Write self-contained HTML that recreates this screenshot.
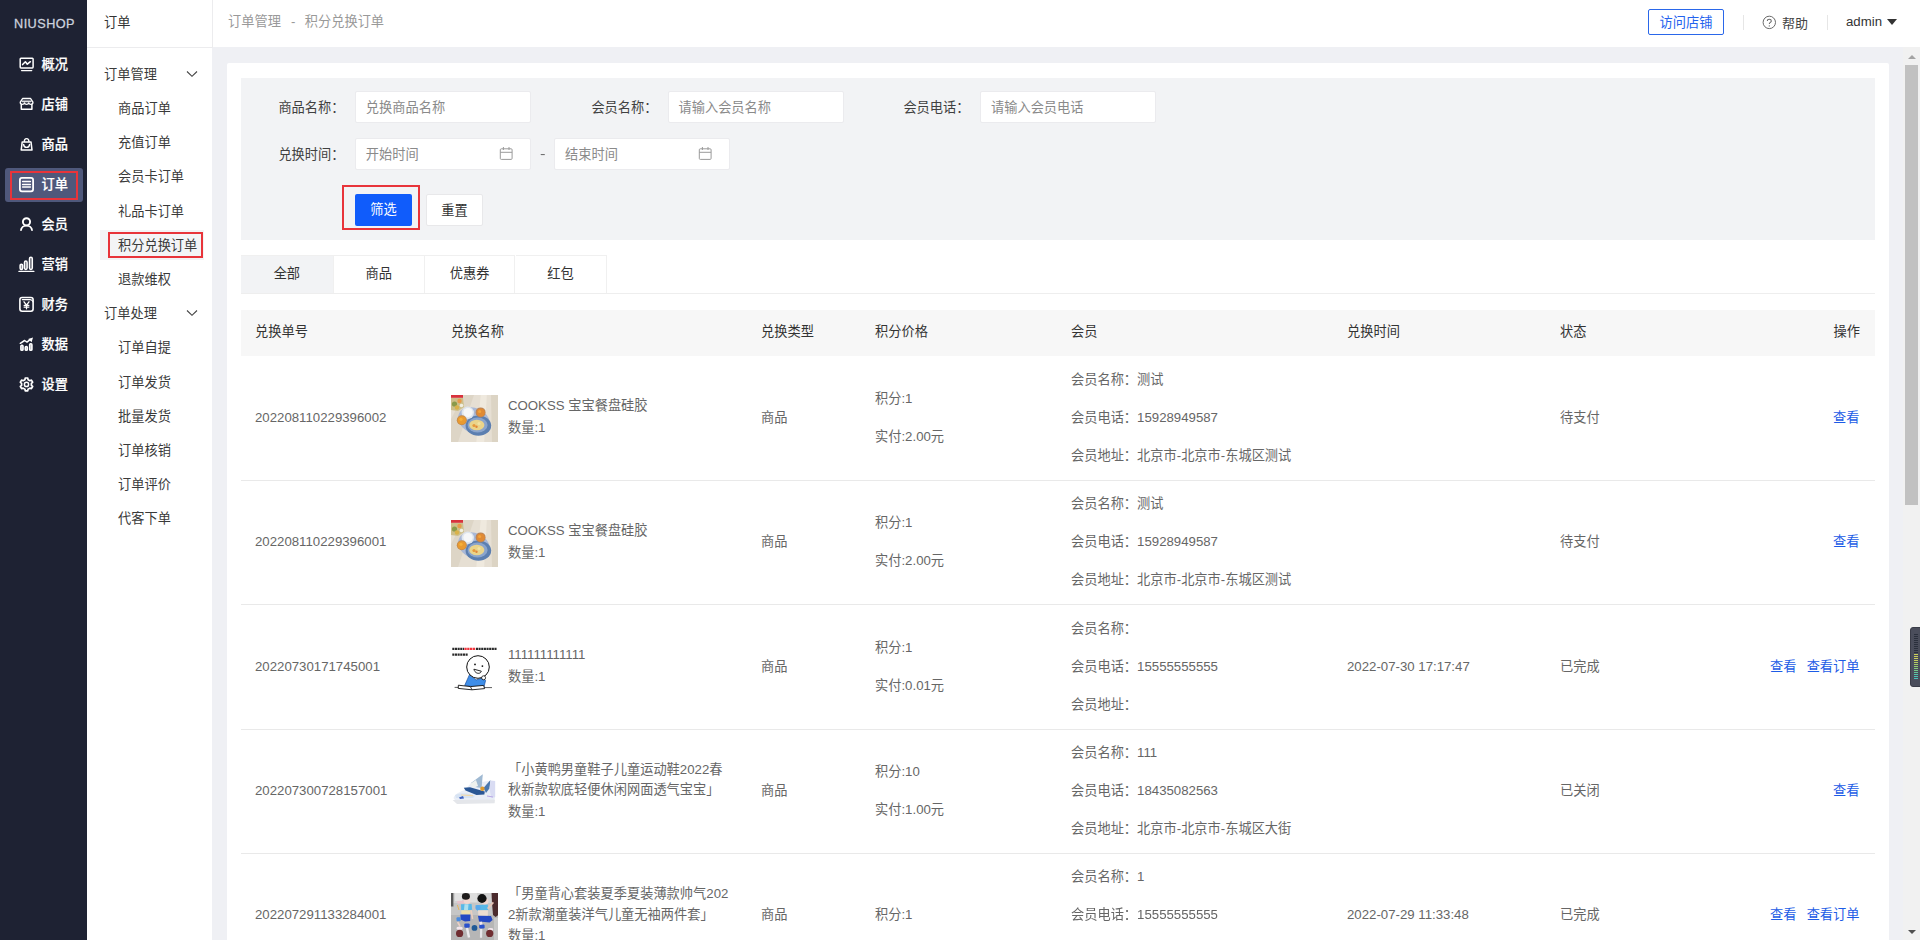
<!DOCTYPE html>
<html lang="zh-CN">
<head>
<meta charset="utf-8">
<title>积分兑换订单</title>
<style>
*{box-sizing:border-box;margin:0;padding:0}
html,body{width:1920px;height:940px;overflow:hidden;background:#eff0f4}
body{font-family:"Liberation Sans","Noto Sans CJK SC",sans-serif;font-size:13.22px;color:#333;position:relative;line-height:1}
a{text-decoration:none;color:inherit}
.abs{position:absolute}
#soft{position:absolute;left:-20px;top:-20px;width:1960px;height:980px;filter:blur(.35px);background:#eff0f4}
#stage{position:absolute;left:20px;top:20px;width:1920px;height:940px}
#nav1{position:absolute;left:0;top:0;width:87px;height:940px;background:#1e2233}
#logo{position:absolute;left:0;top:0;width:89px;height:47px;color:#cdd2df;font-size:12.7px;letter-spacing:.45px;font-weight:400;-webkit-text-stroke:.28px #cdd2df;text-align:center;line-height:48.5px}
.n1{position:absolute;left:5px;width:78px;height:34px;border-radius:3px;color:#fff;font-weight:500;-webkit-text-stroke:.2px #fff;font-size:13.22px}
.n1 span{position:absolute;left:36.6px;top:0px;line-height:33px;white-space:nowrap}

.n1.on{background:#4f587b}
.redbox{position:absolute;border:2.5px solid #e8343a}
#nav2{position:absolute;left:87px;top:0;width:125.2px;height:940px;background:#fff}
#nav2 .hd{position:absolute;left:0;top:0;width:125.6px;border-right:1px solid #ececee;height:47.5px;border-bottom:1px solid #ececee;line-height:45px;padding-left:17px;color:#333}
.g{position:absolute;left:17px;margin-top:.6px;line-height:20px;height:20px;color:#3a3a3a;white-space:nowrap}
.s{position:absolute;left:31px;margin-top:.6px;line-height:20px;height:20px;color:#3a3a3a;white-space:nowrap}
.chev{position:absolute;left:99px;width:12px;height:8px}
#hdr{position:absolute;left:213px;top:0;width:1707px;height:47px;background:#fff}
#crumb{position:absolute;left:15px;top:0;line-height:44.4px;color:#999;white-space:nowrap}
#card{position:absolute;left:227px;top:63px;width:1662px;height:900px;background:#fff;border-radius:2px}
#filter{position:absolute;left:241px;top:78px;width:1634px;height:162px;background:#f2f3f5}
.lab{position:absolute;margin-top:.5px;line-height:30px;height:30px;color:#404040;text-align:right;white-space:nowrap}
.inp{position:absolute;height:32.5px;width:176.4px;background:#fff;border:1px solid #ebebee;border-radius:2px;line-height:30.4px;padding-top:1.2px;padding-left:10px;color:#8a8a8a;white-space:nowrap}
.btn{position:absolute;height:32px;line-height:30px;padding-top:.6px;text-align:center;border-radius:2px;white-space:nowrap}
.tab{position:absolute;top:255px;height:38px;line-height:36px;text-align:center;color:#333;border-right:1px solid #f0f0f0;border-top:1px solid #f0f0f0}
#thead{position:absolute;left:241px;top:310px;width:1634px;height:46px;background:#f7f7f7}
.th{position:absolute;top:310px;line-height:44.2px;height:46px;color:#333;white-space:nowrap}
.rl{position:absolute;left:241px;width:1634px;height:1px;background:#e9e9e9}
.c{position:absolute;color:#666;white-space:nowrap;line-height:20px;height:20px}
.c.link{color:#1c5ce6}
.pic{position:absolute;left:451px;width:47px;height:47px;overflow:hidden}
</style>
</head>
<body>
<div id="soft"><div id="stage">
<div class="abs" style="left:-20px;top:-20px;width:107px;height:980px;background:#1e2233"></div>
<div class="abs" style="left:87px;top:-20px;width:1853px;height:40px;background:#fff"></div>
<div class="abs" style="left:87px;top:900px;width:125.2px;height:60px;background:#fff"></div>
<div class="abs" style="left:1903px;top:47px;width:37px;height:913px;background:#f1f1f1"></div>
<div id="nav1">
<div id="logo">NIUSHOP</div>
<div class="n1" style="top:48px"><span>概况</span></div>
<svg class="abs" style="left:14px;top:52px" width="24" height="24" viewBox="0 0 24 24" fill="none" stroke="#fff" stroke-width="1.5" stroke-linecap="round" stroke-linejoin="round"><rect x="6.2" y="6.3" width="12.9" height="9.6" rx="0.8"/><path d="M7.6 18.6H17.7" stroke-width="1.4"/><path d="M8.6 12.6L11.4 9.7L13.3 12.2L16.4 9.7" stroke-width="1.5"/></svg>
<div class="n1" style="top:88px"><span>店铺</span></div>
<svg class="abs" style="left:14px;top:92px" width="24" height="24" viewBox="0 0 24 24" fill="none" stroke="#fff" stroke-width="1.5" stroke-linecap="round" stroke-linejoin="round"><path d="M8.6 6.5H16.6L18.9 10.2C19 11.6 18.1 12.4 16.9 12.4C15.7 12.4 14.9 11.6 14.7 10.9C14.5 11.6 13.7 12.4 12.6 12.4C11.5 12.4 10.7 11.6 10.5 10.9C10.3 11.6 9.5 12.4 8.3 12.4C7.1 12.4 6.2 11.6 6.3 10.2Z" stroke-width="1.4"/><path d="M8.4 9.4H16.8" stroke-width="1.6" opacity=".85"/><path d="M7.3 12.6V17.3H17.9V12.6" stroke-width="1.5"/></svg>
<div class="n1" style="top:128px"><span>商品</span></div>
<svg class="abs" style="left:14px;top:132px" width="24" height="24" viewBox="0 0 24 24" fill="none" stroke="#fff" stroke-width="1.5" stroke-linecap="round" stroke-linejoin="round"><path d="M8.2 9.9H17L18 18.1H7.2Z" stroke-width="1.5"/><path d="M10.3 9.6C10.3 5.6 14.9 5.6 14.9 9.6" stroke-width="1.4"/><path d="M9.6 12.4C9.9 16.4 15.3 16.4 15.6 12.4" stroke-width="1.4"/></svg>
<div class="n1 on" style="top:168.2px"><span>订单</span></div>
<svg class="abs" style="left:14px;top:172px" width="24" height="24" viewBox="0 0 24 24" fill="none" stroke="#fff" stroke-width="1.5" stroke-linecap="round" stroke-linejoin="round"><rect x="5.9" y="5.9" width="13.2" height="13.4" rx="2" stroke-width="1.8"/><path d="M8.6 9.6H16.4M8.6 12.4H16.4M8.6 15.1H16.4" stroke-width="1.5"/></svg>
<div class="n1" style="top:208px"><span>会员</span></div>
<svg class="abs" style="left:14px;top:212px" width="24" height="24" viewBox="0 0 24 24" fill="none" stroke="#fff" stroke-width="1.5" stroke-linecap="round" stroke-linejoin="round"><circle cx="12.5" cy="9.8" r="3.6" stroke-width="1.9"/><path d="M6.9 18.8C7.2 11.9 17.8 11.9 18.1 18.8" stroke-width="1.9" stroke-linecap="butt"/></svg>
<div class="n1" style="top:248px"><span>营销</span></div>
<svg class="abs" style="left:14px;top:252px" width="24" height="24" viewBox="0 0 24 24" fill="none" stroke="#fff" stroke-width="1.5" stroke-linecap="round" stroke-linejoin="round"><rect x="6.1" y="12.2" width="2.5" height="5.2" rx="1.2" stroke-width="1.5" fill="rgba(255,255,255,.45)"/><rect x="10.5" y="9.1" width="2.6" height="8.3" rx="1.3" stroke-width="1.5" fill="rgba(255,255,255,.3)"/><rect x="15.5" y="5.3" width="2.8" height="12.1" rx="1.4" stroke-width="1.5" fill="rgba(255,255,255,.25)"/><path d="M4.9 19.4H19.9" stroke-width="1.2"/></svg>
<div class="n1" style="top:288px"><span>财务</span></div>
<svg class="abs" style="left:14px;top:292px" width="24" height="24" viewBox="0 0 24 24" fill="none" stroke="#fff" stroke-width="1.5" stroke-linecap="round" stroke-linejoin="round"><rect x="5.9" y="5.5" width="13.2" height="13.7" rx="2.2" stroke-width="1.6"/><path d="M8.3 7.6H16.2C17.6 7.7 18.6 8.6 19 9.9" stroke-width="1.1"/><path d="M10 9.8L12.5 13.2L15 9.8M12.5 13.2V16.8M10.1 13.3H14.9M10.1 15.1H14.9" stroke-width="1.3"/></svg>
<div class="n1" style="top:327.5px"><span>数据</span></div>
<svg class="abs" style="left:14px;top:331.5px" width="24" height="24" viewBox="0 0 24 24" fill="none" stroke="#fff" stroke-width="1.5" stroke-linecap="round" stroke-linejoin="round"><rect x="6.9" y="13.3" width="2.1" height="5" rx=".9" stroke-width="1.6" fill="rgba(255,255,255,.5)"/><rect x="11.3" y="14.5" width="2" height="3.8" rx=".9" stroke-width="1.6" fill="rgba(255,255,255,.5)"/><rect x="15.7" y="11.8" width="2.2" height="6.5" rx=".9" stroke-width="1.6" fill="rgba(255,255,255,.5)"/><path d="M6.3 11.3L10.6 8.5L13 10.1L16 7.6" stroke-width="1.5"/><path d="M14.2 7L19 5.6L17.6 10.2Z" fill="#fff" stroke="none"/></svg>
<div class="n1" style="top:367.5px"><span>设置</span></div>
<svg class="abs" style="left:14px;top:371.5px" width="24" height="24" viewBox="0 0 24 24" fill="none" stroke="#fff" stroke-width="1.5" stroke-linecap="round" stroke-linejoin="round"><path d="M10.95 7.64 L11.26 6.02 L13.74 6.02 L14.05 7.64 L15.85 8.68 L17.41 8.14 L18.65 10.28 L17.39 11.36 L17.39 13.44 L18.65 14.52 L17.41 16.66 L15.85 16.12 L14.05 17.16 L13.74 18.78 L11.26 18.78 L10.95 17.16 L9.15 16.12 L7.59 16.66 L6.35 14.52 L7.61 13.44 L7.61 11.36 L6.35 10.28 L7.59 8.14 L9.15 8.68Z" stroke-width="1.7"/><circle cx="12.5" cy="12.4" r="2.1" stroke-width="1.5"/></svg>
<div class="redbox" style="left:9.5px;top:170.5px;width:68.5px;height:29.5px"></div>
</div>
<div id="nav2">
<div class="hd">订单</div>
<div class="g" style="top:64px">订单管理</div><svg class="chev" style="top:70px" viewBox="0 0 12 8" fill="none" stroke="#444" stroke-width="1.1"><path d="M1 1.5L6 6.3L11 1.5"/></svg>
<div class="s" style="top:98px">商品订单</div>
<div class="s" style="top:132px">充值订单</div>
<div class="s" style="top:166px">会员卡订单</div>
<div class="s" style="top:201px">礼品卡订单</div>
<div class="abs" style="left:13px;top:230px;width:104px;height:30px;background:#f3f4f6"></div>
<div class="s" style="top:235px">积分兑换订单</div>
<div class="s" style="top:269px">退款维权</div>
<div class="redbox" style="left:21px;top:232px;width:95px;height:25.5px"></div>
<div class="g" style="top:303px">订单处理</div><svg class="chev" style="top:309px" viewBox="0 0 12 8" fill="none" stroke="#444" stroke-width="1.1"><path d="M1 1.5L6 6.3L11 1.5"/></svg>
<div class="s" style="top:337px">订单自提</div>
<div class="s" style="top:372px">订单发货</div>
<div class="s" style="top:406px">批量发货</div>
<div class="s" style="top:440px">订单核销</div>
<div class="s" style="top:474px">订单评价</div>
<div class="s" style="top:508px">代客下单</div>
</div>
<div id="hdr">
<div id="crumb">订单管理<span style="margin:0 9.5px 0 10px">-</span>积分兑换订单</div>
<div class="abs" style="left:1435px;top:9px;width:76px;height:26px;border:1px solid #2a67ea;border-radius:2px;color:#2463ee;text-align:center;line-height:26.2px;font-size:13.22px">访问店铺</div>
<div class="abs" style="left:1530px;top:15px;width:1px;height:15px;background:#e6e6e6"></div>
<svg class="abs" style="left:1549px;top:15px;overflow:visible" width="14" height="14" viewBox="0 0 14 14" fill="none" stroke="#6a6a6a" stroke-width="1"><circle cx="7.3" cy="7.4" r="6.2"/><path d="M5.3 6C5.3 3.6 9.3 3.6 9.3 6C9.3 7.4 7.3 7.4 7.3 9" stroke-width="1.1"/><circle cx="7.3" cy="10.9" r=".65" fill="#6a6a6a" stroke="none"/></svg>
<div class="abs" style="left:1569px;top:0;line-height:48.2px;color:#444;font-size:13px">帮助</div>
<div class="abs" style="left:1614px;top:15px;width:1px;height:15px;background:#e6e6e6"></div>
<div class="abs" style="left:1633px;top:0;line-height:43.5px;color:#333;font-size:13.22px">admin</div>
<div class="abs" style="left:1674px;top:19px;width:0;height:0;border-left:5.5px solid transparent;border-right:5.5px solid transparent;border-top:6px solid #333"></div>
</div>
<div id="card"></div>
<div id="filter"></div>
<div class="lab" style="left:244.5px;width:100px;top:92px">商品名称：</div><div class="inp" style="left:354.8px;top:90.7px">兑换商品名称</div>
<div class="lab" style="left:557.5px;width:100px;top:92px">会员名称：</div><div class="inp" style="left:667.5px;top:90.7px">请输入会员名称</div>
<div class="lab" style="left:869.5px;width:100px;top:92px">会员电话：</div><div class="inp" style="left:980px;top:90.7px">请输入会员电话</div>
<div class="lab" style="left:244.5px;width:100px;top:139px">兑换时间：</div><div class="inp" style="left:354.8px;top:137.7px">开始时间</div><svg class="abs" style="left:499.3px;top:145.8px" width="15" height="15" viewBox="0 0 15 15" fill="none" stroke="#9a9a9a" stroke-width="1"><rect x="1.3" y="2.8" width="11.8" height="10.6" rx="1"/><path d="M1.3 6.3H13.1M4.4 1V4M10 1V4"/></svg>
<div class="abs" style="left:540.4px;top:139px;line-height:30px;color:#666;transform:scaleX(1.25);transform-origin:0 0">-</div>
<div class="inp" style="left:554px;top:137.7px">结束时间</div><svg class="abs" style="left:698.3px;top:145.8px" width="15" height="15" viewBox="0 0 15 15" fill="none" stroke="#9a9a9a" stroke-width="1"><rect x="1.3" y="2.8" width="11.8" height="10.6" rx="1"/><path d="M1.3 6.3H13.1M4.4 1V4M10 1V4"/></svg>
<div class="btn" style="left:355px;top:194px;width:57px;background:#105cfb;color:#fff">筛选</div>
<div class="redbox" style="left:342px;top:184.5px;width:78px;height:45.5px"></div>
<div class="btn" style="left:425.8px;top:194px;width:57.4px;background:#fff;border:1px solid #e8e8ea;color:#333">重置</div>
<div class="abs" style="left:241px;top:292.5px;width:1634px;height:1px;background:#eeeeee"></div>
<div class="tab" style="left:241px;width:92.69999999999999px;background:#f2f3f5;">全部</div>
<div class="tab" style="left:333.7px;width:91.0px;background:#fff;">商品</div>
<div class="tab" style="left:424.7px;width:90.80000000000001px;background:#fff;">优惠券</div>
<div class="tab" style="left:515.5px;width:91.10000000000002px;background:#fff;">红包</div>
<div id="thead"></div>
<div class="th" style="left:255px">兑换单号</div>
<div class="th" style="left:451px">兑换名称</div>
<div class="th" style="left:761px">兑换类型</div>
<div class="th" style="left:875px">积分价格</div>
<div class="th" style="left:1071px">会员</div>
<div class="th" style="left:1347px">兑换时间</div>
<div class="th" style="left:1560px">状态</div>
<div class="th" style="right:60px">操作</div>
<div class="rl" style="top:479.8px"></div>
<div class="c" style="left:255px;top:407.7px">202208110229396002</div>
<svg class="pic" style="top:395.1px" width="47" height="47" viewBox="0 0 47 47"><g style="filter:blur(0.7px)">
<rect x="-5" y="-5" width="57" height="57" fill="#e6dfd3"/>
<path d="M14 -3L24 -3L6 50L-3 50L-3 30Z" fill="#ddd5c6"/>
<path d="M30 -3L36 -3L33 50L25 50Z" fill="#efe9de"/>
<path d="M40 -3L50 -3L50 50L41 50Z" fill="#dcd4c4"/>
<path d="M0 3L12 3L13 12L7 16L0 15Z" fill="#cdbf8a"/>
<circle cx="3.5" cy="9" r="2.6" fill="#8a9a4a"/><circle cx="8.5" cy="6" r="2.2" fill="#e89a4a"/><circle cx="6" cy="12.5" r="2.2" fill="#d9b24a"/><circle cx="10.5" cy="10.5" r="1.8" fill="#f0efe2"/>
<rect x="-3" y="-3" width="15" height="5.8" fill="#d8323c"/>
<ellipse cx="23" cy="25.5" rx="16.5" ry="12.5" fill="#a9b8d6" transform="rotate(25 23 25.5)"/>
<ellipse cx="27.4" cy="30.6" rx="12.8" ry="10.2" fill="#5c7fb0"/>
<ellipse cx="26.6" cy="30" rx="10" ry="7.6" fill="#8aa4cc"/>
<ellipse cx="25.8" cy="30" rx="7.6" ry="5.3" fill="#ead48a"/>
<circle cx="23" cy="30.5" r="1.6" fill="#e79a3a"/><circle cx="28" cy="28.5" r="1.5" fill="#f1e3a4"/><circle cx="25.5" cy="31.8" r="1.2" fill="#e2863a"/>
<circle cx="16.8" cy="17.8" r="6.2" fill="#dfe6ee"/><circle cx="17" cy="17.6" r="4.6" fill="#f6f7f8"/>
<circle cx="29.6" cy="17.4" r="5" fill="#b9855a"/><circle cx="29.8" cy="17.5" r="4" fill="#e08a34"/><circle cx="28.6" cy="16.4" r="1.5" fill="#f3a43a"/>
<circle cx="10.8" cy="25.3" r="5" fill="#c58a4a"/><circle cx="10.8" cy="25.3" r="4.1" fill="#e99a30"/><circle cx="10" cy="24.3" r="1.6" fill="#f6b03a"/>
</g></svg>
<div class="c" style="left:508px;top:396.1px">COOKSS 宝宝餐盘硅胶</div>
<div class="c" style="left:508px;top:418.1px">数量:1</div>
<div class="c" style="left:761px;top:407.7px">商品</div>
<div class="c" style="left:875px;top:388.7px">积分:1</div>
<div class="c" style="left:875px;top:426.7px">实付:2.00元</div>
<div class="c" style="left:1071px;top:369.7px">会员名称：测试</div>
<div class="c" style="left:1071px;top:407.7px">会员电话：15928949587</div>
<div class="c" style="left:1071px;top:445.7px">会员地址：北京市-北京市-东城区测试</div>
<div class="c" style="left:1560px;top:407.7px">待支付</div>
<div class="c link" style="right:60.5px;top:407.7px">查看</div>
<div class="rl" style="top:604.2px"></div>
<div class="c" style="left:255px;top:532.1px">202208110229396001</div>
<svg class="pic" style="top:519.5px" width="47" height="47" viewBox="0 0 47 47"><g style="filter:blur(0.7px)">
<rect x="-5" y="-5" width="57" height="57" fill="#e6dfd3"/>
<path d="M14 -3L24 -3L6 50L-3 50L-3 30Z" fill="#ddd5c6"/>
<path d="M30 -3L36 -3L33 50L25 50Z" fill="#efe9de"/>
<path d="M40 -3L50 -3L50 50L41 50Z" fill="#dcd4c4"/>
<path d="M0 3L12 3L13 12L7 16L0 15Z" fill="#cdbf8a"/>
<circle cx="3.5" cy="9" r="2.6" fill="#8a9a4a"/><circle cx="8.5" cy="6" r="2.2" fill="#e89a4a"/><circle cx="6" cy="12.5" r="2.2" fill="#d9b24a"/><circle cx="10.5" cy="10.5" r="1.8" fill="#f0efe2"/>
<rect x="-3" y="-3" width="15" height="5.8" fill="#d8323c"/>
<ellipse cx="23" cy="25.5" rx="16.5" ry="12.5" fill="#a9b8d6" transform="rotate(25 23 25.5)"/>
<ellipse cx="27.4" cy="30.6" rx="12.8" ry="10.2" fill="#5c7fb0"/>
<ellipse cx="26.6" cy="30" rx="10" ry="7.6" fill="#8aa4cc"/>
<ellipse cx="25.8" cy="30" rx="7.6" ry="5.3" fill="#ead48a"/>
<circle cx="23" cy="30.5" r="1.6" fill="#e79a3a"/><circle cx="28" cy="28.5" r="1.5" fill="#f1e3a4"/><circle cx="25.5" cy="31.8" r="1.2" fill="#e2863a"/>
<circle cx="16.8" cy="17.8" r="6.2" fill="#dfe6ee"/><circle cx="17" cy="17.6" r="4.6" fill="#f6f7f8"/>
<circle cx="29.6" cy="17.4" r="5" fill="#b9855a"/><circle cx="29.8" cy="17.5" r="4" fill="#e08a34"/><circle cx="28.6" cy="16.4" r="1.5" fill="#f3a43a"/>
<circle cx="10.8" cy="25.3" r="5" fill="#c58a4a"/><circle cx="10.8" cy="25.3" r="4.1" fill="#e99a30"/><circle cx="10" cy="24.3" r="1.6" fill="#f6b03a"/>
</g></svg>
<div class="c" style="left:508px;top:520.5px">COOKSS 宝宝餐盘硅胶</div>
<div class="c" style="left:508px;top:542.5px">数量:1</div>
<div class="c" style="left:761px;top:532.1px">商品</div>
<div class="c" style="left:875px;top:513.1px">积分:1</div>
<div class="c" style="left:875px;top:551.1px">实付:2.00元</div>
<div class="c" style="left:1071px;top:494.1px">会员名称：测试</div>
<div class="c" style="left:1071px;top:532.1px">会员电话：15928949587</div>
<div class="c" style="left:1071px;top:570.1px">会员地址：北京市-北京市-东城区测试</div>
<div class="c" style="left:1560px;top:532.1px">待支付</div>
<div class="c link" style="right:60.5px;top:532.1px">查看</div>
<div class="rl" style="top:728.6px"></div>
<div class="c" style="left:255px;top:656.5px">20220730171745001</div>
<svg class="pic" style="top:643.9px" width="47" height="47" viewBox="0 0 47 47"><g style="filter:blur(0.3px)">
<rect width="47" height="47" fill="#fff"/>
<g stroke="#2a2a2a" stroke-width="2.3" stroke-dasharray="2.1 .55" fill="none"><path d="M1.3 4.9H13.1M24.9 4.9H45.8M1.3 10.7H17"/></g>
<path d="M13.4 4.9H24.6" stroke="#f0343c" stroke-width="2.3" stroke-dasharray="2.3 .5" fill="none"/>
<path d="M18.6 30.4L13.6 41.6L32.8 43.8L34.6 36.4L31.4 33.8L25 36Z" fill="#3f8ee8" stroke="#1c4f9c" stroke-width=".7"/>
<circle cx="27" cy="23" r="11.3" fill="#fff" stroke="#111" stroke-width="1"/>
<circle cx="24" cy="20.4" r=".9" fill="#111"/><circle cx="31.4" cy="22.1" r=".9" fill="#111"/>
<path d="M22.9 25.2L30.3 27.2C29.6 30.4 24 30.2 22.9 25.2Z" fill="#fff" stroke="#111" stroke-width=".9"/>
<circle cx="32.6" cy="33.8" r="2" fill="#fff" stroke="#111" stroke-width=".8"/>
<path d="M3.6 43.4H8M33 43.6H41" stroke="#333" stroke-width=".8"/>
<path d="M7.4 41.2L19.4 42.6L32.6 41.4L33.6 44.6L21 45.8L7.2 44.4Z" fill="#fff" stroke="#111" stroke-width=".9"/>
<path d="M19.4 42.6L21 45.8" stroke="#111" stroke-width=".8"/>
</g></svg>
<div class="c" style="left:508px;top:644.9px">111111111111</div>
<div class="c" style="left:508px;top:666.9px">数量:1</div>
<div class="c" style="left:761px;top:656.5px">商品</div>
<div class="c" style="left:875px;top:637.5px">积分:1</div>
<div class="c" style="left:875px;top:675.5px">实付:0.01元</div>
<div class="c" style="left:1071px;top:618.5px">会员名称：</div>
<div class="c" style="left:1071px;top:656.5px">会员电话：15555555555</div>
<div class="c" style="left:1071px;top:694.5px">会员地址：</div>
<div class="c" style="left:1347px;top:656.5px">2022-07-30 17:17:47</div>
<div class="c" style="left:1560px;top:656.5px">已完成</div>
<div class="c link" style="right:60.5px;top:656.5px">查看订单</div>
<div class="c link" style="right:123.5px;top:656.5px">查看</div>
<div class="rl" style="top:853.0px"></div>
<div class="c" style="left:255px;top:780.9px">202207300728157001</div>
<svg class="pic" style="top:768.3px" width="47" height="47" viewBox="0 0 47 47"><g style="filter:blur(0.7px)">
<rect width="47" height="47" fill="#fff"/>
<path d="M2.5 30C4 26 9 23.5 14 22L20 15L31.5 6.5L30.5 14L37 13L43.5 13.5L44 30L42 34L6 35Z" fill="#e9eef7"/>
<path d="M20 15L31.8 6.3L30.6 20L24 19Z" fill="#9fb9d2"/>
<path d="M19 16L25 12L27 18L22 20Z" fill="#eef1ee"/>
<path d="M12.8 19.8L19 19.2L33.8 23.4L33.4 26.6L25.5 27L14.5 22.6Z" fill="#2a5795"/>
<path d="M32.5 20L39.4 12L38.4 20.5L35 25Z" fill="#4a78ae"/>
<path d="M39.6 12.6L44.2 13L44.2 29L40.4 30L38.6 21Z" fill="#d9dcf3"/>
<circle cx="31.4" cy="20.8" r="2.2" fill="#dd9a2e"/>
<path d="M4 27C10 24 20 25 24 28L22 30L5 30Z" fill="#d7e3f3"/>
<path d="M8 29.5L12 28L13 30.5L9 31Z" fill="#3d62c2"/>
<path d="M10 27L22 27.6" stroke="#f1d9a8" stroke-width="1.2"/>
<path d="M1.6 32L44 31.6L43.6 35.2L6 36Z" fill="#e4e6ea"/>
<path d="M36 28L42 29" stroke="#b7a7e6" stroke-width="1"/>
</g></svg>
<div class="c" style="left:508px;top:759.7px">「小黄鸭男童鞋子儿童运动鞋2022春</div>
<div class="c" style="left:508px;top:780.1px">秋新款软底轻便休闲网面透气宝宝」</div>
<div class="c" style="left:508px;top:801.8px">数量:1</div>
<div class="c" style="left:761px;top:780.9px">商品</div>
<div class="c" style="left:875px;top:761.9px">积分:10</div>
<div class="c" style="left:875px;top:799.9px">实付:1.00元</div>
<div class="c" style="left:1071px;top:742.9px">会员名称：111</div>
<div class="c" style="left:1071px;top:780.9px">会员电话：18435082563</div>
<div class="c" style="left:1071px;top:818.9px">会员地址：北京市-北京市-东城区大街</div>
<div class="c" style="left:1560px;top:780.9px">已关闭</div>
<div class="c link" style="right:60.5px;top:780.9px">查看</div>
<div class="rl" style="top:977.4px"></div>
<div class="c" style="left:255px;top:905.3px">202207291133284001</div>
<svg class="pic" style="top:892.7px" width="47" height="47" viewBox="0 0 47 47"><g style="filter:blur(0.65px)">
<rect x="-5" y="-5" width="57" height="57" fill="#bcbcbc"/>
<rect x="2" y="0" width="39" height="10" fill="#d2d2d2"/>
<rect x="4" y="0" width="7" height="8" fill="#e2e2e2"/><rect x="19" y="0" width="7" height="9" fill="#dedede"/>
<rect x="0" y="10" width="47" height="12" fill="#c6c6c6"/>
<rect x="0" y="22" width="47" height="25" fill="#b6b6b6"/>
<rect x="-3" y="-3" width="5.4" height="16.5" fill="#575757"/>
<path d="M40.4 -3H50V20L44.6 24L42 22L41 10Z" fill="#4b2b2d"/>
<rect x="43" y="25" width="4" height="22" fill="#c8c8c8"/>
<path d="M6 8L13.4 7.6L13.6 10.6L6.4 10.8Z" fill="#e7c3cb"/>
<path d="M6.4 12L8 17" stroke="#e8b45a" stroke-width="1"/>
<circle cx="16" cy="7.8" r="3.3" fill="#f1d6cf"/>
<ellipse cx="14.9" cy="3.4" rx="4" ry="3.3" fill="#1f1c1c"/>
<path d="M10 11.2L20.6 11L21.2 17.2L10.2 17.2Z" fill="#58b8e8"/>
<path d="M13.5 11.2L17.5 11.2L17 17L13 17Z" fill="#aee0ee"/>
<path d="M10.2 17.2L19.6 17.2L19.2 21.8L10.4 21.8Z" fill="#ecdcaa"/>
<path d="M20 17L21.6 26" stroke="#eccfc0" stroke-width="1.5"/>
<path d="M9.4 21.6L19.4 21.6L19.2 28L14 28.4L9.6 26.4Z" fill="#2448c3"/>
<rect x="5.5" y="24.2" width="4.2" height="4" rx="1" fill="#4a8be0"/>
<rect x="13.3" y="30.4" width="5.4" height="4.4" rx="1.2" fill="#2a52cc"/>
<path d="M6.6 29L9 33" stroke="#ecd0c6" stroke-width="1.6"/>
<ellipse cx="8.6" cy="35.3" rx="3.1" ry="1.7" fill="#f3e7ee"/>
<path d="M16 35L18 44.6" stroke="#ececee" stroke-width="2.4"/>
<circle cx="8.6" cy="40.4" r="3.6" fill="#6f2d31"/>
<circle cx="34" cy="8.6" r="3.3" fill="#f1d6cf"/>
<ellipse cx="31" cy="5.5" rx="4.6" ry="4.4" fill="#121212"/>
<path d="M24.4 12.2L36.8 11.6L37.2 17.2L26 17.4Z" fill="#58b8e8"/>
<ellipse cx="27" cy="14.6" rx="2.6" ry="2.6" fill="#5aa8ec"/>
<path d="M36.6 15.6L42.4 9.4" stroke="#e8c6b8" stroke-width="1.6"/>
<path d="M27 17.3L37 17.2L36.8 22.8L27.4 22.8Z" fill="#ecdcd0"/>
<path d="M27 22.7L40 23L41.6 27L38.6 29.6L28 28.6Z" fill="#2448c3"/>
<rect x="28.2" y="31.5" width="5.4" height="3.9" rx="1.2" fill="#2a52cc"/>
<path d="M29.4 29L30.4 31.6" stroke="#f0e8f0" stroke-width="2.6"/>
<path d="M30.2 36L30 44.8" stroke="#e6e6ea" stroke-width="2.2"/>
<circle cx="23.5" cy="34.9" r="2.9" fill="#1f5a96"/>
<ellipse cx="39.6" cy="36.4" rx="2.7" ry="1.3" fill="#f3e7ee"/>
<circle cx="38.7" cy="40.4" r="3.6" fill="#6f2d31"/>
</g></svg>
<div class="c" style="left:508px;top:884.1px">「男童背心套装夏季夏装薄款帅气202</div>
<div class="c" style="left:508px;top:904.5px">2新款潮童装洋气儿童无袖两件套」</div>
<div class="c" style="left:508px;top:926.2px">数量:1</div>
<div class="c" style="left:761px;top:905.3px">商品</div>
<div class="c" style="left:875px;top:905.3px">积分:1</div>
<div class="c" style="left:1071px;top:867.3px">会员名称：1</div>
<div class="c" style="left:1071px;top:905.3px">会员电话：15555555555</div>
<div class="c" style="left:1071px;top:943.3px">会员地址：北京市</div>
<div class="c" style="left:1347px;top:905.3px">2022-07-29 11:33:48</div>
<div class="c" style="left:1560px;top:905.3px">已完成</div>
<div class="c link" style="right:60.5px;top:905.3px">查看订单</div>
<div class="c link" style="right:123.5px;top:905.3px">查看</div>
<div class="abs" style="left:1903px;top:47px;width:17px;height:893px;background:#f1f1f1"></div>
<div class="abs" style="left:1905px;top:65px;width:13px;height:440px;background:#c1c1c1"></div>
<div class="abs" style="left:1907.5px;top:54.5px;width:0;height:0;border-left:4px solid transparent;border-right:4px solid transparent;border-bottom:4.5px solid #a3a3a3"></div>
<div class="abs" style="left:1907.5px;top:929.5px;width:0;height:0;border-left:4px solid transparent;border-right:4px solid transparent;border-top:4.5px solid #505050"></div>
<div class="abs" style="left:1910px;top:627px;width:14px;height:59.5px;border-radius:3px;background:#4a4d5b;border:1px solid #3a3c48"><div class="abs" style="left:2.9px;top:5.7px;width:4.3px;height:1.1px;background:#2a2f3c"></div><div class="abs" style="left:2.9px;top:7.7px;width:4.3px;height:1.1px;background:#2a2f3c"></div><div class="abs" style="left:2.9px;top:9.7px;width:4.3px;height:1.1px;background:#2a2f3c"></div><div class="abs" style="left:2.9px;top:11.7px;width:4.3px;height:1.1px;background:#2a2f3c"></div><div class="abs" style="left:2.9px;top:13.7px;width:4.3px;height:1.1px;background:#2a2f3c"></div><div class="abs" style="left:2.9px;top:15.7px;width:4.3px;height:1.1px;background:#2a2f3c"></div><div class="abs" style="left:2.9px;top:17.7px;width:4.3px;height:1.1px;background:#2a2f3c"></div><div class="abs" style="left:2.9px;top:19.7px;width:4.3px;height:1.1px;background:#2a2f3c"></div><div class="abs" style="left:2.9px;top:21.7px;width:4.3px;height:1.1px;background:#2a2f3c"></div><div class="abs" style="left:2.9px;top:23.7px;width:4.3px;height:1.1px;background:#2a2f3c"></div><div class="abs" style="left:2.9px;top:25.7px;width:4.3px;height:1.1px;background:#c9cf5a"></div><div class="abs" style="left:2.9px;top:27.7px;width:4.3px;height:1.1px;background:#c9cf5a"></div><div class="abs" style="left:2.9px;top:29.7px;width:4.3px;height:1.1px;background:#c9cf5a"></div><div class="abs" style="left:2.9px;top:31.7px;width:4.3px;height:1.1px;background:#c4cf5c"></div><div class="abs" style="left:2.9px;top:33.7px;width:4.3px;height:1.1px;background:#b4cc62"></div><div class="abs" style="left:2.9px;top:35.7px;width:4.3px;height:1.1px;background:#a4cc68"></div><div class="abs" style="left:2.9px;top:37.7px;width:4.3px;height:1.1px;background:#94cb70"></div><div class="abs" style="left:2.9px;top:39.7px;width:4.3px;height:1.1px;background:#84ca7a"></div><div class="abs" style="left:2.9px;top:41.7px;width:4.3px;height:1.1px;background:#74c988"></div><div class="abs" style="left:2.9px;top:43.7px;width:4.3px;height:1.1px;background:#62c79a"></div><div class="abs" style="left:2.9px;top:45.7px;width:4.3px;height:1.1px;background:#52c5aa"></div><div class="abs" style="left:2.9px;top:47.7px;width:4.3px;height:1.1px;background:#4cc3b4"></div><div class="abs" style="left:2.9px;top:49.7px;width:4.3px;height:1.1px;background:#48c1ba"></div></div>
</div></div>
</body>
</html>
